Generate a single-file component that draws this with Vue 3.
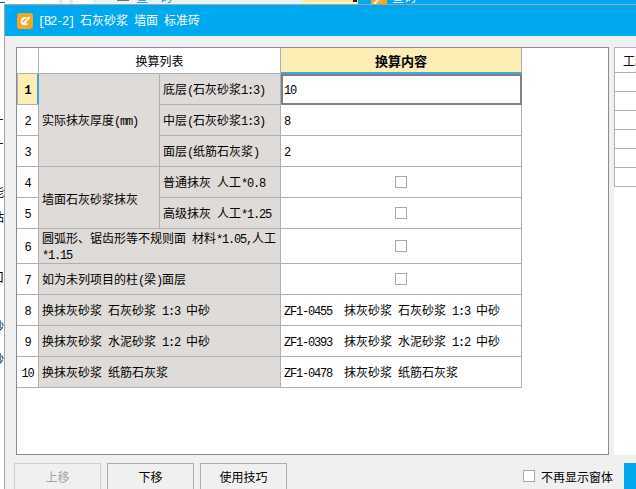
<template>
  <div class="screen">
    <!-- bits of the main window showing behind the dialog -->
    <div class="behind">
      <i class="strip s1"></i>
      <i class="strip s2"></i>
      <i class="strip s3"></i>
      <i class="strip s4"></i>
      <i class="strip s5"></i>
      <i class="strip s6"></i>
      <i class="strip s7"></i>
      <i class="strip s8"></i>
      <i class="strip s9"></i>
      <i class="strip s10"></i>
      <span class="peek p-top-left">查询</span>
      <span class="peek p-top-right">查询</span>
      <svg class="peek-icon" width="16" height="16" viewBox="0 0 16 16">
        <rect width="16" height="16" rx="2" fill="#f6a623" />
        <path d="M3 15L15 3" stroke="#fff" stroke-width="2" />
      </svg>
      <span v-for="f in leftBits" :key="f.t" class="bit" :style="{ top: f.y + 'px' }">{{ f.t }}</span>
    </div>

    <div class="dialog">
      <div class="titlebar">
        <svg class="logo" width="16" height="16" viewBox="0 0 16 16">
          <rect width="16" height="16" rx="3" fill="#f8a51f" />
          <path d="M4.5 8.5c0-2.4 2-3.9 4.2-3.5M4.6 8.8c.3 2 2.4 3 5 2.3" fill="none" stroke="#fff" stroke-width="2" stroke-linecap="round" />
          <path d="M6.5 9.3L12 3.6l1.4 1.3-5.5 5.6-2 .6z" fill="#fff" />
        </svg>
        <span class="title"><Tx s="[B2-2] 石灰砂浆 墙面 标准砖" /></span>
      </div>

      <div class="main">
        <div class="panel">
          <table class="grid">
            <colgroup>
              <col style="width: 22px" />
              <col style="width: 121px" />
              <col style="width: 121px" />
              <col style="width: 241px" />
            </colgroup>
            <thead>
              <tr>
                <th class="corner"></th>
                <th colspan="2" class="list-head">换算列表</th>
                <th class="content-head">换算内容</th>
              </tr>
            </thead>
            <tbody>
              <tr>
                <td class="no current"><Tx s="1" /></td>
                <td rowspan="3" class="label"><Tx s="实际抹灰厚度(mm)" /></td>
                <td class="label"><Tx s="底层(石灰砂浆1:3)" /></td>
                <td class="active"><Tx s="10" /></td>
              </tr>
              <tr>
                <td class="no"><Tx s="2" /></td>
                <td class="label"><Tx s="中层(石灰砂浆1:3)" /></td>
                <td><Tx s="8" /></td>
              </tr>
              <tr>
                <td class="no"><Tx s="3" /></td>
                <td class="label"><Tx s="面层(纸筋石灰浆)" /></td>
                <td><Tx s="2" /></td>
              </tr>
              <tr>
                <td class="no"><Tx s="4" /></td>
                <td rowspan="2" class="label">墙面石灰砂浆抹灰</td>
                <td class="label"><Tx s="普通抹灰 人工*0.8" /></td>
                <td><span class="check"></span></td>
              </tr>
              <tr>
                <td class="no"><Tx s="5" /></td>
                <td class="label"><Tx s="高级抹灰 人工*1.25" /></td>
                <td><span class="check"></span></td>
              </tr>
              <tr class="tall">
                <td class="no"><Tx s="6" /></td>
                <td colspan="2" class="label"><Tx s="圆弧形、锯齿形等不规则面 材料*1.05,人工*1.15" /></td>
                <td><span class="check"></span></td>
              </tr>
              <tr>
                <td class="no"><Tx s="7" /></td>
                <td colspan="2" class="label"><Tx s="如为未列项目的柱(梁)面层" /></td>
                <td><span class="check"></span></td>
              </tr>
              <tr v-for="r in swaps" :key="r.no">
                <td class="no"><Tx :s="r.no" /></td>
                <td colspan="2" class="label"><Tx :s="r.name" /></td>
                <td><Tx :s="r.value" /></td>
              </tr>
            </tbody>
          </table>
        </div>

        <div class="side">
          <div class="side-head">工料机</div>
          <div v-for="n in 6" :key="n" class="side-row"></div>
        </div>
      </div>

      <div class="footer">
        <button class="btn" disabled>上移</button>
        <button class="btn">下移</button>
        <button class="btn">使用技巧</button>
        <label class="no-show"><span class="check small"></span>不再显示窗体</label>
        <div class="confirm"></div>
      </div>
    </div>
  </div>
</template>

<script setup>
import { h } from 'vue'

// SimSun has half-width latin, so ascii runs get their own narrow class
const Tx = (props) =>
  props.s
    .split(/([\x20-\x7e]+)/)
    .filter(Boolean)
    .map((part) => (/^[\x20-\x7e]/.test(part) ? h('span', { class: 'latin' }, part) : part))
Tx.props = ['s']

const swaps = [
  { no: '8', name: '换抹灰砂浆 石灰砂浆 1:3 中砂', value: 'ZF1-0455  抹灰砂浆 石灰砂浆 1:3 中砂' },
  { no: '9', name: '换抹灰砂浆 水泥砂浆 1:2 中砂', value: 'ZF1-0393  抹灰砂浆 水泥砂浆 1:2 中砂' },
  { no: '10', name: '换抹灰砂浆 纸筋石灰浆', value: 'ZF1-0478  抹灰砂浆 纸筋石灰浆' }
]

const leftBits = [
  { t: '能', y: 186 },
  { t: '站', y: 211 },
  { t: '口', y: 271 },
  { t: '砂', y: 320 },
  { t: '妙', y: 353 }
]
</script>

<style scoped>
.screen {
  position: relative;
  width: 636px;
  height: 489px;
  overflow: hidden;
  background: #fff;
  font-family: "Noto Sans CJK SC", sans-serif;
  font-size: 12px;
  line-height: 13px;
  color: #000;
}

.behind i,
.behind span,
.behind svg {
  position: absolute;
}

.strip {
  top: 0;
  height: 5px;
}
.s1 { left: 59px; width: 4px; background: #e8e8e8; }
.s2 { left: 69px; width: 4px; background: #e8e8e8; }
.s3 { left: 93px; width: 209px; background: #e4f6fc; }
.s4 { left: 302px; width: 56px; background: #fdeeb5; }
.s5 { left: 358px; width: 278px; background: #00a8f0; }
.s6 { left: 117px; width: 12px; height: 1px; background: #707070; }
.s7 { left: 0; top: 2px; width: 5px; height: 1px; background: #1a5a90; }
.s8 { left: 353px; width: 4px; height: 2px; background: #222; }
.s9 { left: 0; top: 119px; width: 3px; height: 1px; background: #222; }
.s10 { left: 0; top: 143px; width: 3px; height: 1px; background: #222; }

.peek {
  top: -9px;
  line-height: 12px;
}
.p-top-left {
  left: 136px;
  color: #0a8fd8;
  letter-spacing: 12px;
}
.p-top-right {
  left: 392px;
  color: #fff;
}
.peek-icon {
  left: 371px;
  top: -11px;
}

.bit {
  left: -8px;
  line-height: 12px;
}

.dialog {
  margin: 4px 0 0 4px;
  height: 485px;
  border-top: 1px solid #a6a6a6;
  border-left: 1px solid #a6a6a6;
  background: #f0f0f0;
  overflow: hidden;
  position: relative;
}

.titlebar {
  display: flex;
  align-items: center;
  height: 31px;
  padding-left: 12px;
  background: #00a8f0;
}

.logo {
  flex-shrink: 0;
  margin-right: 5px;
}

.title {
  color: #fff;
  white-space: pre;
}

.main {
  display: flex;
  gap: 5px;
  margin: 11px 0 0 11px;
}

.panel {
  flex-shrink: 0;
  width: 593px;
  height: 408px;
  box-sizing: border-box;
  border: 1px solid #878c96;
  background: #fff;
}

.grid {
  table-layout: fixed;
  width: 505px;
  border-collapse: separate;
  border-spacing: 0;
}

.grid th,
.grid td {
  box-sizing: border-box;
  height: 31px;
  padding: 1px 3px 0;
  border-right: 1px solid #b0b0b0;
  border-bottom: 1px solid #b0b0b0;
  text-align: left;
  font-weight: normal;
  vertical-align: middle;
}

.grid th {
  height: 26px;
  padding-top: 0;
}

.grid .list-head {
  text-align: center;
}

.grid .content-head {
  background: #fdeeb5;
  border-bottom: 2px solid #3ba9d9;
  text-align: center;
  font-size: 13px;
  font-weight: bold;
}

.grid .tall td {
  height: 35px;
}

.grid .no {
  padding: 1px 0 0;
  text-align: center;
}

.grid .current {
  background: #fdeeb5;
  font-weight: bold;
  border-right-color: #3ba9d9;
  box-shadow: inset 1px 0 0 #b0b0b0, inset -1px 0 0 #3ba9d9;
}

.grid .label {
  background: #dfdbd8;
}

.grid .active {
  border-right: 0;
  border-bottom: 0;
  box-shadow: inset 0 0 0 2px #808080;
}

.check {
  display: block;
  box-sizing: border-box;
  width: 12px;
  height: 12px;
  margin: -1px auto 0;
  border: 1px solid #a9a9a9;
  background: #fff;
}

.side {
  flex: 1;
  height: 408px;
  background: #fff;
}

.side-head,
.side-row {
  box-sizing: border-box;
  border-left: 1px solid #b0b0b0;
  border-bottom: 1px solid #b0b0b0;
}

.side-head {
  height: 26px;
  padding: 6px 0 0 8px;
  border-top: 1px solid #b0b0b0;
  white-space: nowrap;
  overflow: hidden;
}

.side-row {
  height: 19px;
}

.footer {
  display: flex;
  align-items: flex-start;
  gap: 6px;
  margin: 8px 0 0 9px;
}

.btn {
  flex-shrink: 0;
  width: 87px;
  height: 28px;
  padding: 0 0 2px;
  border: 1px solid #adadad;
  background: #f0f0f0;
  font: inherit;
  color: #000;
}

.btn:disabled {
  border-color: #cfcfcf;
  color: #a3a3a3;
}

.no-show {
  display: flex;
  align-items: center;
  gap: 6px;
  height: 26px;
  margin-left: auto;
  margin-right: 5px;
}

.check.small {
  margin: 0;
}

.confirm {
  flex-shrink: 0;
  width: 12px;
  height: 30px;
  background: #00a8f0;
}
</style>

<style>
body {
  margin: 0;
}

.latin {
  font-family: "Liberation Mono", monospace;
  font-size: 12px;
  letter-spacing: -1.2px;
  white-space: pre-wrap;
}
</style>
